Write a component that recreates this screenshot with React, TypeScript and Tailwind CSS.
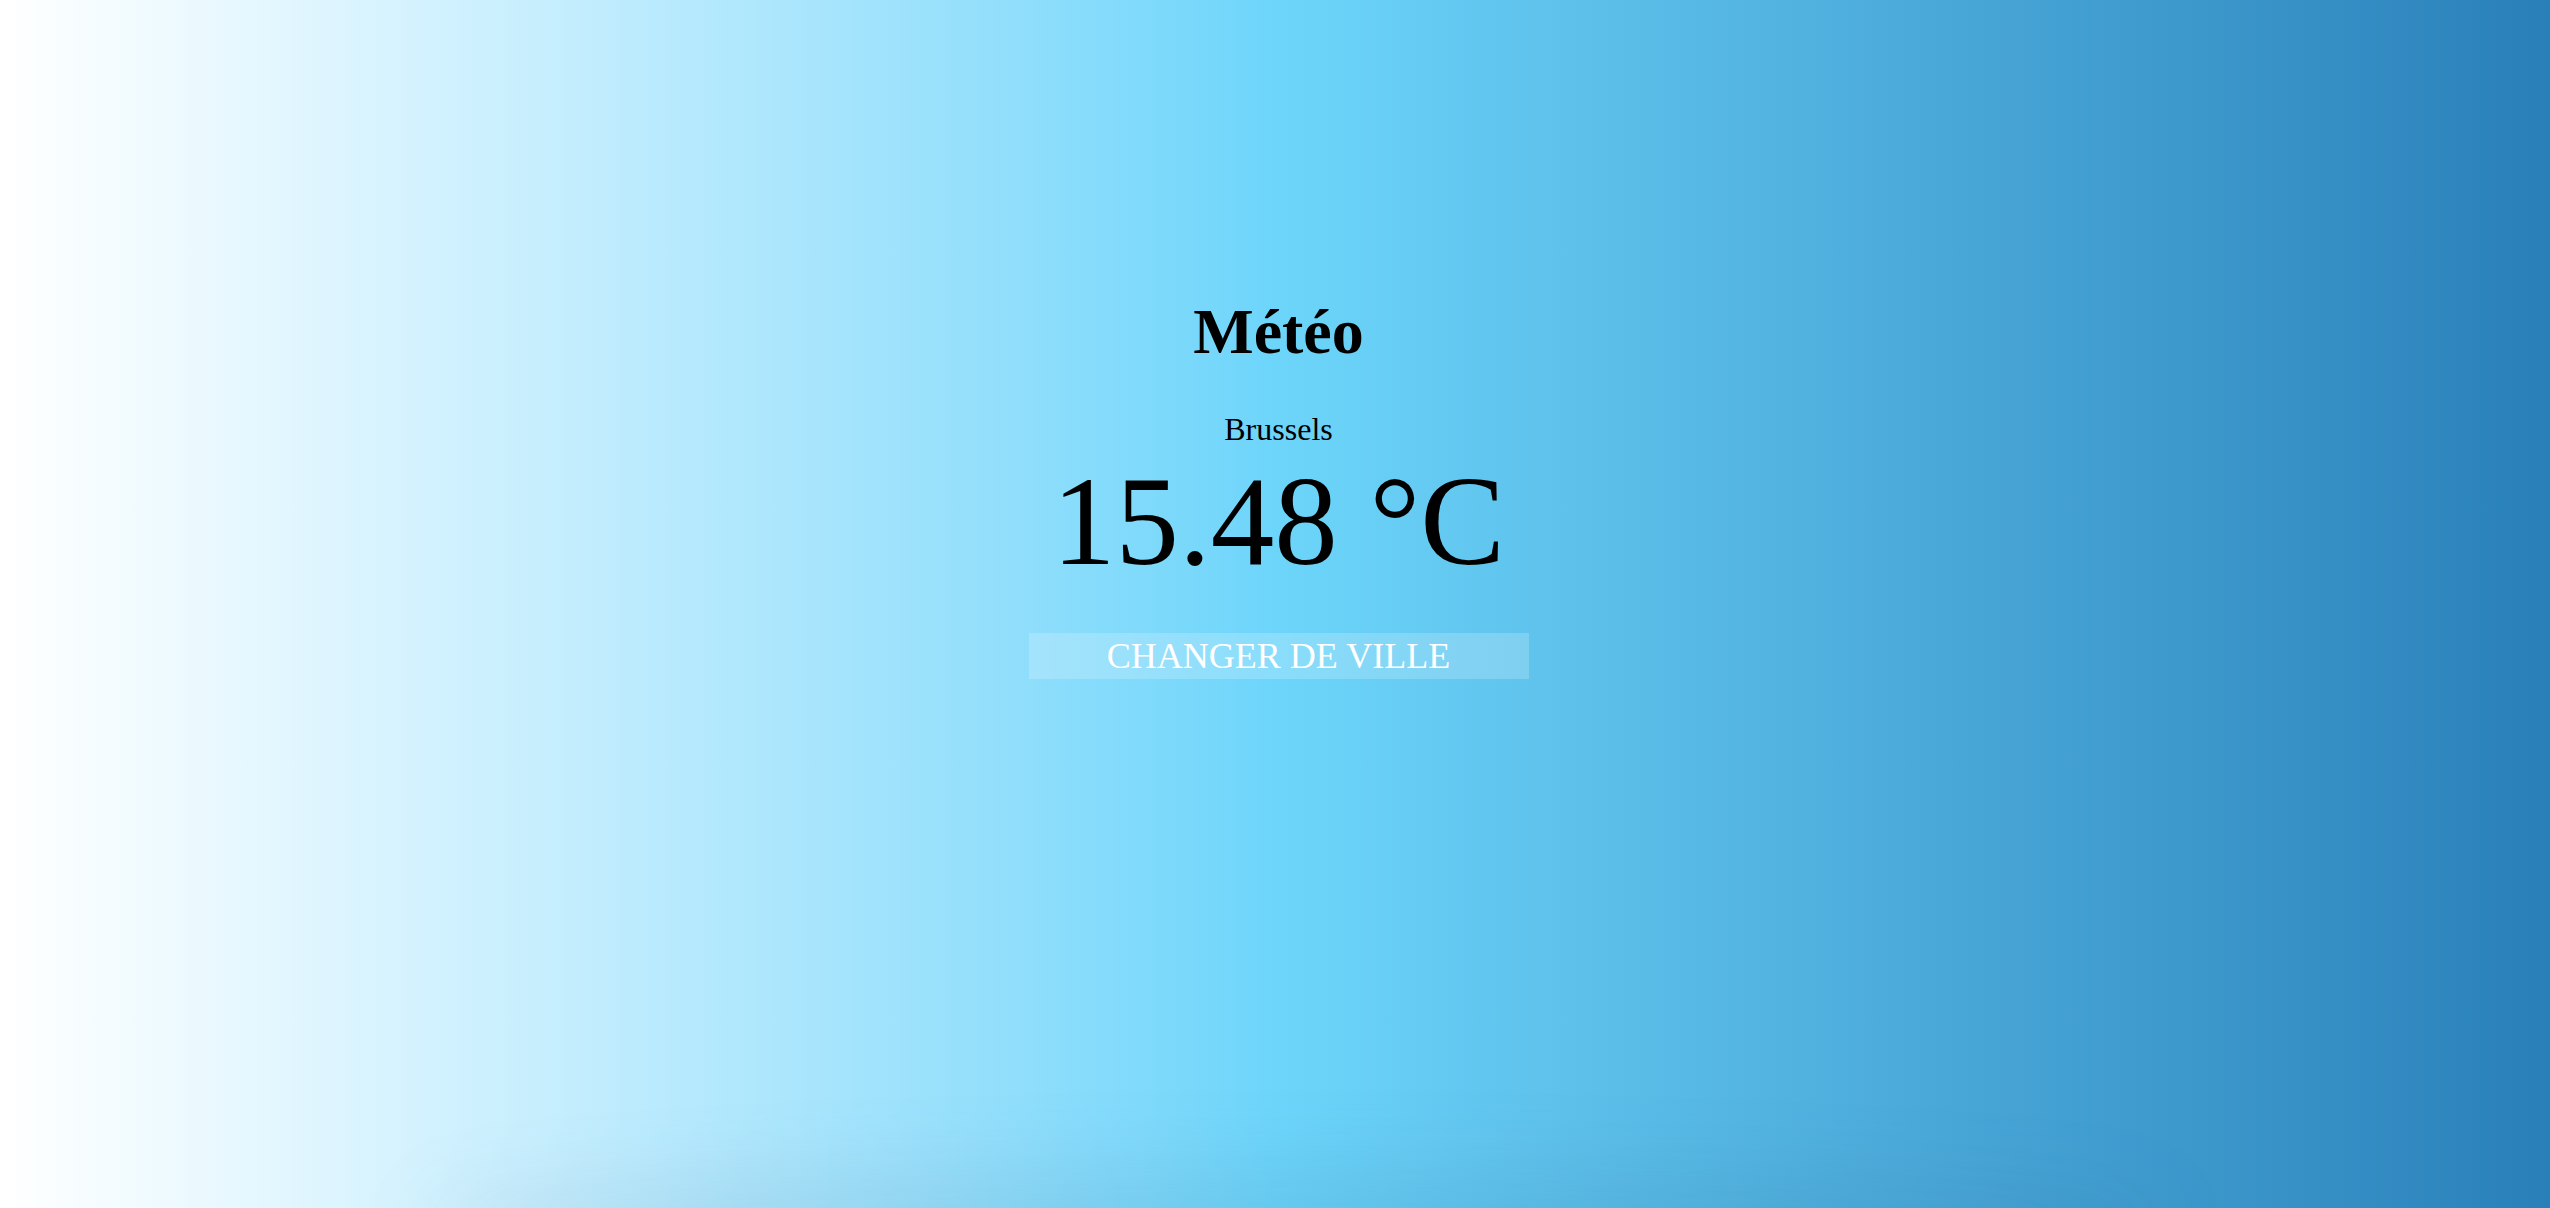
import React from 'react'

const serif = { fontFamily: '"Liberation Serif", "Times New Roman", serif' }

export default function App() {
  return (
    <main
      className="relative flex h-[1208px] w-full flex-col items-center overflow-hidden bg-gradient-to-r from-white via-[#6dd5fa] to-[#2980b9] pl-[7px] text-black"
      style={serif}
    >
      {/* soft shadow bleeding in from below the viewport */}
      <div className="pointer-events-none absolute -bottom-[70px] left-[420px] right-[380px] h-[110px] rounded-[50%] bg-[#1a4f7a]/10 blur-2xl" />

      <h1 className="mt-[294px] text-[64px] font-bold leading-[76px]">Météo</h1>
      <p className="mt-[39px] text-[32px] leading-[40px]">Brussels</p>
      <p className="mt-[2px] text-[127px] leading-[140px]">15.48 °C</p>
      <button className="mt-[42px] h-[46px] w-[500px] bg-white/20 text-[36px] leading-[46px] text-white">
        CHANGER DE VILLE
      </button>
    </main>
  )
}
